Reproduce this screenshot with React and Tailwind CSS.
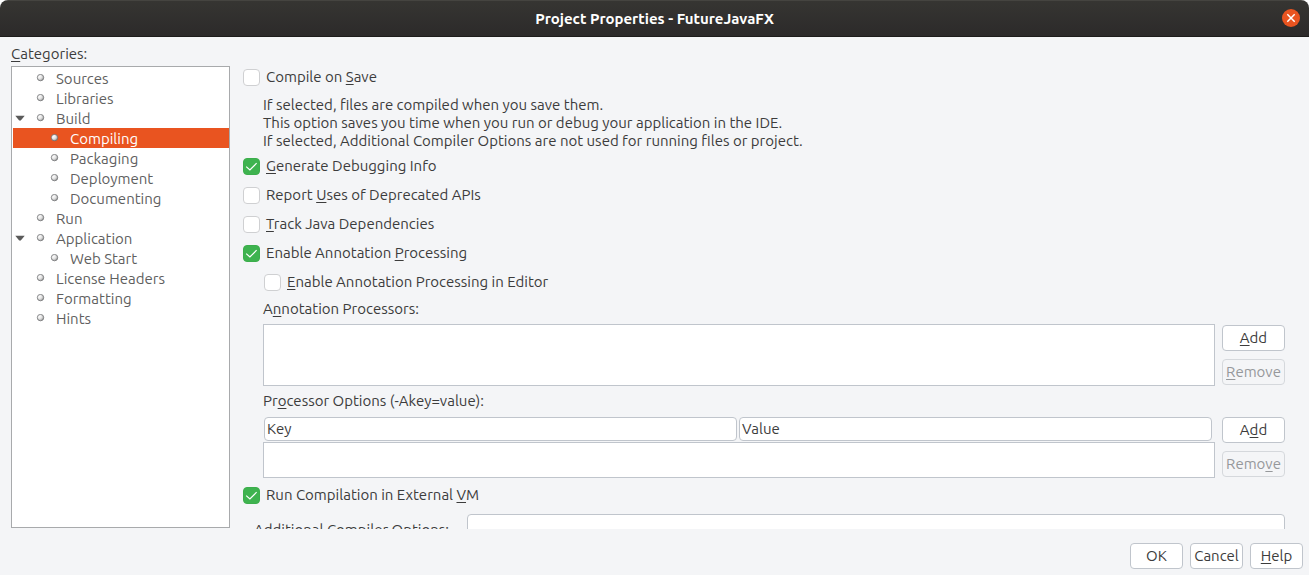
import React, { useState } from "react";

const U = ({ children }) => <span className="underline decoration-1 underline-offset-2">{children}</span>;

function Bullet() {
  return (
    <svg width="9" height="9" viewBox="0 0 9 9" className="shrink-0" aria-hidden="true">
      <defs>
        <radialGradient id="ball" cx="30%" cy="28%" r="85%">
          <stop offset="0" stopColor="#ffffff" />
          <stop offset="0.5" stopColor="#e2e2e2" />
          <stop offset="1" stopColor="#8c8c8c" />
        </radialGradient>
      </defs>
      <circle cx="4.5" cy="3.6" r="3.2" fill="url(#ball)" stroke="#6e7072" strokeWidth="0.8" />
    </svg>
  );
}

const categories = [
  { name: "Sources" },
  { name: "Libraries" },
  { name: "Build", children: ["Compiling", "Packaging", "Deployment", "Documenting"] },
  { name: "Run" },
  { name: "Application", children: ["Web Start"] },
  { name: "License Headers" },
  { name: "Formatting" },
  { name: "Hints" },
];

function TreeRow({ name, nested, expandable, open, onToggle, selected, onSelect }) {
  return (
    <div className={"flex h-5 items-center " + (selected ? "bg-[#e95420] text-white" : "text-[#5f5f5f]")}>
      <div className={"flex shrink-0 items-center " + (nested ? "w-[37px]" : "w-[23px]")}>
        {expandable && (
          <button type="button" onClick={onToggle} aria-label={"Toggle " + name} className="ml-0.5">
            <svg width="10" height="6" viewBox="0 0 10 6" className={open ? "" : "-rotate-90"} aria-hidden="true">
              <path d="M0.3 0.8H9.7L5.8 5.4H4.2Z" fill="#5a5a5a" />
            </svg>
          </button>
        )}
      </div>
      <button type="button" onClick={onSelect} className="flex h-5 flex-1 items-center gap-[11px] text-left leading-[18px]">
        <Bullet />
        <span className="pt-0.5">{name}</span>
      </button>
    </div>
  );
}

function Tree() {
  const [selected, setSelected] = useState("Compiling");
  const [closed, setClosed] = useState({});
  return (
    <ul aria-labelledby="categories" className="flex-1 border border-[#a8aaac] bg-white py-px pl-px">
      {categories.map((c) => (
        <li key={c.name}>
          <TreeRow
            name={c.name}
            expandable={!!c.children}
            open={!closed[c.name]}
            onToggle={() => setClosed({ ...closed, [c.name]: !closed[c.name] })}
            selected={selected === c.name}
            onSelect={() => setSelected(c.name)}
          />
          {c.children && !closed[c.name] && (
            <ul>
              {c.children.map((n) => (
                <li key={n}>
                  <TreeRow name={n} nested selected={selected === n} onSelect={() => setSelected(n)} />
                </li>
              ))}
            </ul>
          )}
        </li>
      ))}
    </ul>
  );
}

function Check({ children, checked = false, className = "" }) {
  return (
    <label className={"flex h-[29px] w-fit items-center gap-1.5 " + className}>
      <span className="relative block size-[17px] shrink-0">
        <input
          type="checkbox"
          defaultChecked={checked}
          className="peer block size-[17px] appearance-none rounded-[4px] border border-[#cfd0d2] bg-white checked:border-[#3cae4c] checked:bg-[#3eb34f]"
        />
        <svg viewBox="0 0 17 17" className="pointer-events-none absolute inset-0 hidden size-[17px] peer-checked:block" aria-hidden="true">
          <path d="M3.2 8.6L6.9 12L13.6 5.2" fill="none" stroke="#fff" strokeWidth="1.2" />
        </svg>
      </span>
      <span className="pb-0.5">{children}</span>
    </label>
  );
}

function Button({ children, disabled, wide }) {
  return (
    <button
      type="button"
      disabled={disabled}
      className={
        "flex h-[26px] items-center justify-center rounded border border-[#c0c5cc] bg-white leading-5 disabled:border-[#d5d8dc] disabled:bg-[#f4f5f7] disabled:text-[#96989b] " +
        (wide ? "w-[63px]" : "w-[53px]")
      }
    >
      <span>{children}</span>
    </button>
  );
}

const headCell = "h-6 rounded border border-[#c0c5cc] bg-white px-0.5 text-left leading-[22px]";

export default function App() {
  return (
    <div className="bg-white">
      <div className="flex h-screen flex-col overflow-hidden rounded-t-lg bg-[#f4f5f7] font-[Ubuntu,'Noto_Sans',sans-serif] text-[15px] leading-[18px] text-[#3c3c3c]">
        <header className="flex h-[37px] shrink-0 items-center border-t border-b border-t-[#454440] border-b-[#1d1c1b] bg-linear-to-b from-[#363532] to-[#2c2a2a] px-2">
          <div className="w-5" />
          <h1 className="flex-1 text-center font-bold text-white">Project Properties - FutureJavaFX</h1>
          <button type="button" aria-label="Close">
            <svg width="20" height="20" viewBox="0 0 20 20" aria-hidden="true">
              <circle cx="10" cy="9" r="9" fill="#e95420" />
              <path d="M6.3 5.3L13.7 12.7M13.7 5.3L6.3 12.7" stroke="#fff" strokeWidth="1.5" />
            </svg>
          </button>
        </header>

        <main className="flex min-h-0 flex-1 pt-[5px] pr-6 pl-[11px]">
          <nav className="flex w-[219px] shrink-0 flex-col pb-px">
            <h2 id="categories" className="flex h-6 items-center">
              <span><U>C</U>ategories:</span>
            </h2>
            <Tree />
          </nav>

          <section className="ml-[13px] min-w-0 flex-1 overflow-hidden pt-[21px]">
            <Check>Compile on <U>S</U>ave</Check>
            <p className="mt-1 mb-0.5 pl-5">
              If selected, files are compiled when you save them.
              <br />
              This option saves you time when you run or debug your application in the IDE.
              <br />
              If selected, Additional Compiler Options are not used for running files or project.
            </p>
            <Check checked><U>G</U>enerate Debugging Info</Check>
            <Check>Report <U>U</U>ses of Deprecated APIs</Check>
            <Check><U>T</U>rack Java Dependencies</Check>
            <Check checked>Enable Annotation <U>P</U>rocessing</Check>
            <Check className="ml-[21px]"><U>E</U>nable Annotation Processing in Editor</Check>

            <div className="pl-5">
              <label htmlFor="processors" className="flex h-6 items-center">
                <span>A<U>n</U>notation Processors:</span>
              </label>
              <div className="mt-[3px] flex gap-[7px]">
                <select id="processors" multiple className="h-[62px] min-w-0 flex-1 border border-[#c0c5cc] bg-white" />
                <div className="flex flex-col gap-2 pt-px">
                  <Button wide><U>A</U>dd</Button>
                  <Button wide disabled><U>R</U>emove</Button>
                </div>
              </div>

              <h3 id="options" className="mt-[3px] flex h-6 items-center">
                <span>Pr<U>o</U>cessor Options (-Akey=value):</span>
              </h3>
              <div className="mt-1 flex gap-[7px]">
                <div className="min-w-0 flex-1">
                  <table aria-labelledby="options" className="w-full table-fixed border-separate border-spacing-0">
                    <thead>
                      <tr>
                        <th className="pr-0.5 pb-px pl-px font-normal"><div className={headCell}>Key</div></th>
                        <th className="pr-[3px] pb-px font-normal"><div className={headCell}>Value</div></th>
                      </tr>
                    </thead>
                    <tbody>
                      <tr>
                        <td colSpan="2" className="h-9 border border-[#c0c5cc] bg-white" />
                      </tr>
                    </tbody>
                  </table>
                </div>
                <div className="flex flex-col gap-2">
                  <Button wide>A<U>d</U>d</Button>
                  <Button wide disabled>Remo<U>v</U>e</Button>
                </div>
              </div>
            </div>

            <Check checked className="mt-[3px]">Run Compilation in External <U>V</U>M</Check>
            <div className="mt-1 flex items-center pl-[11px]">
              <label htmlFor="compiler-options" className="w-[213px] shrink-0">Additional Compiler Options:</label>
              <input id="compiler-options" type="text" className="h-8 min-w-0 flex-1 rounded border border-[#c0c5cc] bg-white px-1" />
            </div>
          </section>
        </main>

        <footer className="flex justify-end gap-[7px] pt-3.5 pr-1.5 pb-1.5">
          <Button>OK</Button>
          <Button>Cancel</Button>
          <Button><U>H</U>elp</Button>
        </footer>
      </div>
    </div>
  );
}
